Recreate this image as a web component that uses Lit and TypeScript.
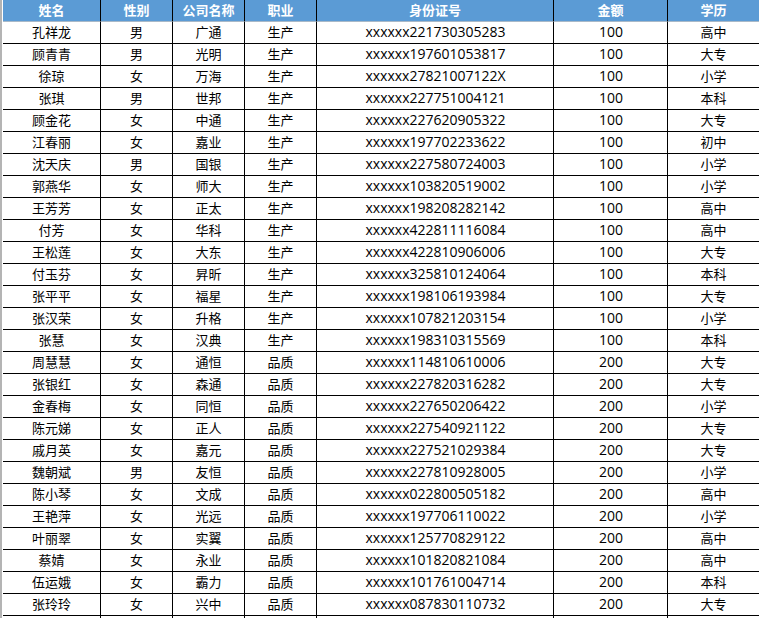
import { LitElement, html, css } from "lit";
import { customElement } from "lit/decorators.js";

const HEAD = ["姓名", "性别", "公司名称", "职业", "身份证号", "金额", "学历"];
const DATA = `孔祥龙 男 广通 生产 221730305283 100 高中
顾青青 男 光明 生产 197601053817 100 大专
徐琼 女 万海 生产 27821007122X 100 小学
张琪 男 世邦 生产 227751004121 100 本科
顾金花 女 中通 生产 227620905322 100 大专
江春丽 女 嘉业 生产 197702233622 100 初中
沈天庆 男 国银 生产 227580724003 100 小学
郭燕华 女 师大 生产 103820519002 100 小学
王芳芳 女 正太 生产 198208282142 100 高中
付芳 女 华科 生产 422811116084 100 高中
王松莲 女 大东 生产 422810906006 100 大专
付玉芬 女 昇昕 生产 325810124064 100 本科
张平平 女 福星 生产 198106193984 100 大专
张汉荣 女 升格 生产 107821203154 100 小学
张慧 女 汉典 生产 198310315569 100 本科
周慧慧 女 通恒 品质 114810610006 200 大专
张银红 女 森通 品质 227820316282 200 大专
金春梅 女 同恒 品质 227650206422 200 小学
陈元娣 女 正人 品质 227540921122 200 大专
戚月英 女 嘉元 品质 227521029384 200 大专
魏朝斌 男 友恒 品质 227810928005 200 小学
陈小琴 女 文成 品质 022800505182 200 高中
王艳萍 女 光远 品质 197706110022 200 小学
叶丽翠 女 实翼 品质 125770829122 200 高中
蔡婧 女 永业 品质 101820821084 200 高中
伍运娥 女 霸力 品质 101761004714 200 本科
张玲玲 女 兴中 品质 087830110732 200 大专
　 　 　 　 　 　 　`
  .split("\n")
  .map((l) => l.split(" "));

@customElement("app-root")
export class AppRoot extends LitElement {
  static styles = css`
    :host {
      display: block;
      width: 759px;
      height: 618px;
      overflow: hidden;
      background: #fff;
      font-family: "Noto Sans CJK SC", "Liberation Sans", sans-serif;
      font-size: 13px;
      color: #000;
    }
    .sheet {
      display: flex;
      height: 618px;
      overflow: hidden;
    }
    .gutter {
      width: 2px;
      margin-right: 1px;
      flex: none;
      background: #b4b4b4;
    }
    .table {
      display: grid;
      grid-template-columns: 98px 72px 72px 72px 237px 114px 91px;
      grid-auto-rows: 22px;
      align-content: start;
    }
    .cell {
      box-sizing: border-box;
      display: flex;
      align-items: center;
      justify-content: center;
      border-right: 1px solid #000;
      border-bottom: 1px solid #000;
      white-space: nowrap;
      line-height: 20px;
      padding-bottom: 1px;
    }
    .cell:nth-child(7n) {
      border-right: none;
    }
    .cell.num {
      font-family: "Open Sans", "Liberation Sans", sans-serif;
      font-size: 14px;
      padding-left: 1px;
    }
    .head {
      background: #5b9bd5;
      color: #fff;
      font-weight: 700;
      height: 22px;
      border-bottom-color: #a9b9c8;
    }
  `;

  render() {
    return html`<div class="sheet">
      <div class="gutter"></div>
      <div class="table">
        ${HEAD.map((h) => html`<div class="cell head">${h}</div>`)}
        ${DATA.map(
          (r) => html`
            <div class="cell">${r[0]}</div>
            <div class="cell">${r[1]}</div>
            <div class="cell">${r[2]}</div>
            <div class="cell">${r[3]}</div>
            <div class="cell num">${r[4].trim() ? "xxxxxx" + r[4] : r[4]}</div>
            <div class="cell num">${r[5]}</div>
            <div class="cell">${r[6]}</div>
          `
        )}
      </div>
    </div>`;
  }
}
